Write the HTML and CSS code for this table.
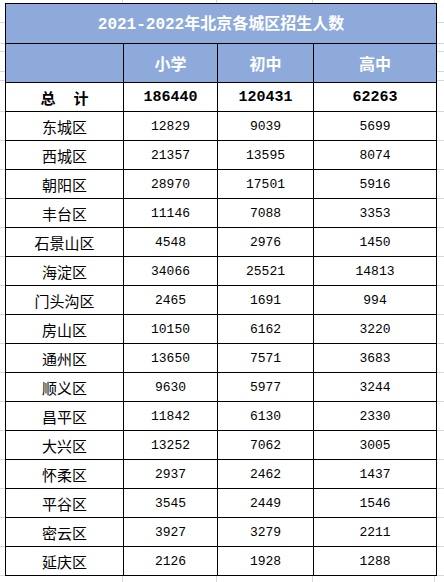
FILE: index.html
```html
<!DOCTYPE html>
<html lang="zh-CN">
<head>
<meta charset="utf-8">
<title>2021-2022年北京各城区招生人数</title>
<link rel="stylesheet" href="styles.css">
</head>
<body>
<div class="sheet">
  <table class="grid">
    <colgroup>
      <col class="c1"><col class="c2"><col class="c3"><col class="c4">
    </colgroup>
    <thead>
      <tr class="title-row">
        <th colspan="4" class="title"><span class="num">2021-2022</span>年北京各城区招生人数</th>
      </tr>
      <tr class="head-row">
        <th></th><th>小学</th><th>初中</th><th>高中</th>
      </tr>
    </thead>
    <tbody>
      <tr class="total">
        <td class="name">总&emsp;&thinsp;计</td><td class="num">186440</td><td class="num">120431</td><td class="num">62263</td>
      </tr>
      <tr><td class="name">东城区</td><td class="num">12829</td><td class="num">9039</td><td class="num">5699</td></tr>
      <tr><td class="name">西城区</td><td class="num">21357</td><td class="num">13595</td><td class="num">8074</td></tr>
      <tr><td class="name">朝阳区</td><td class="num">28970</td><td class="num">17501</td><td class="num">5916</td></tr>
      <tr><td class="name">丰台区</td><td class="num">11146</td><td class="num">7088</td><td class="num">3353</td></tr>
      <tr><td class="name">石景山区</td><td class="num">4548</td><td class="num">2976</td><td class="num">1450</td></tr>
      <tr><td class="name">海淀区</td><td class="num">34066</td><td class="num">25521</td><td class="num">14813</td></tr>
      <tr><td class="name">门头沟区</td><td class="num">2465</td><td class="num">1691</td><td class="num">994</td></tr>
      <tr><td class="name">房山区</td><td class="num">10150</td><td class="num">6162</td><td class="num">3220</td></tr>
      <tr><td class="name">通州区</td><td class="num">13650</td><td class="num">7571</td><td class="num">3683</td></tr>
      <tr><td class="name">顺义区</td><td class="num">9630</td><td class="num">5977</td><td class="num">3244</td></tr>
      <tr><td class="name">昌平区</td><td class="num">11842</td><td class="num">6130</td><td class="num">2330</td></tr>
      <tr><td class="name">大兴区</td><td class="num">13252</td><td class="num">7062</td><td class="num">3005</td></tr>
      <tr><td class="name">怀柔区</td><td class="num">2937</td><td class="num">2462</td><td class="num">1437</td></tr>
      <tr><td class="name">平谷区</td><td class="num">3545</td><td class="num">2449</td><td class="num">1546</td></tr>
      <tr><td class="name">密云区</td><td class="num">3927</td><td class="num">3279</td><td class="num">2211</td></tr>
      <tr><td class="name">延庆区</td><td class="num">2126</td><td class="num">1928</td><td class="num">1288</td></tr>
    </tbody>
  </table>
</div>
</body>
</html>
```
FILE: styles.css
```css
html, body {
  margin: 0;
  padding: 0;
  background: #ffffff;
}

.sheet {
  width: 444px;
  height: 582px;
  box-sizing: border-box;
  padding: 3px 0 0 5px;
  overflow: hidden;
  background-color: #ffffff;
  background-image:
    linear-gradient(to right, transparent 122px, #d3d9e3 122px, #d3d9e3 123px, transparent 123px),
    linear-gradient(to right, transparent 216px, #d3d9e3 216px, #d3d9e3 217px, transparent 217px),
    linear-gradient(to right, transparent 312px, #d3d9e3 312px, #d3d9e3 313px, transparent 313px),
    linear-gradient(to right, transparent 434px, #d3d9e3 434px, #d3d9e3 435px, transparent 435px),
    linear-gradient(to bottom, transparent 43px, #d3d9e3 43px, #d3d9e3 44px, transparent 44px),
    linear-gradient(to bottom, transparent 71px, #d3d9e3 71px, #d3d9e3 72px, transparent 72px),
    repeating-linear-gradient(to bottom, transparent 0, transparent 28px, #d3d9e3 28px, #d3d9e3 29px);
  background-position: 0 0, 0 0, 0 0, 0 0, 0 0, 0 0, 0 83px;
  background-repeat: no-repeat, no-repeat, no-repeat, no-repeat, no-repeat, no-repeat, repeat-y;
}

.grid {
  border-collapse: collapse;
  table-layout: fixed;
  width: 431px;
  background: #ffffff;
  color: #000000;
  font-family: "Noto Sans CJK SC", sans-serif;
}

.c1 { width: 118px; }
.c2 { width: 94px; }
.c3 { width: 96px; }
.c4 { width: 123px; }

.grid th,
.grid td {
  border: 1px solid #000000;
  padding: 0;
  text-align: center;
  vertical-align: middle;
  white-space: nowrap;
  line-height: 1;
}

.grid thead th {
  background: #8eaadb;
  color: #ffffff;
  font-weight: 700;
}

.title-row { height: 40px; }
.head-row { height: 39px; }
.grid tbody tr { height: 29px; }

.title {
  font-size: 16px;
}

.title .num {
  font-family: "Liberation Mono", monospace;
  font-size: 16px;
  font-weight: 700;
}

.head-row th {
  font-size: 16px;
}

.name {
  font-size: 15px;
  font-weight: 400;
}

.num {
  font-family: "Liberation Mono", monospace;
  font-size: 13px;
}

.total .name {
  font-weight: 700;
  font-size: 15px;
}

.total .num {
  font-weight: 700;
  font-size: 15px;
}
```
